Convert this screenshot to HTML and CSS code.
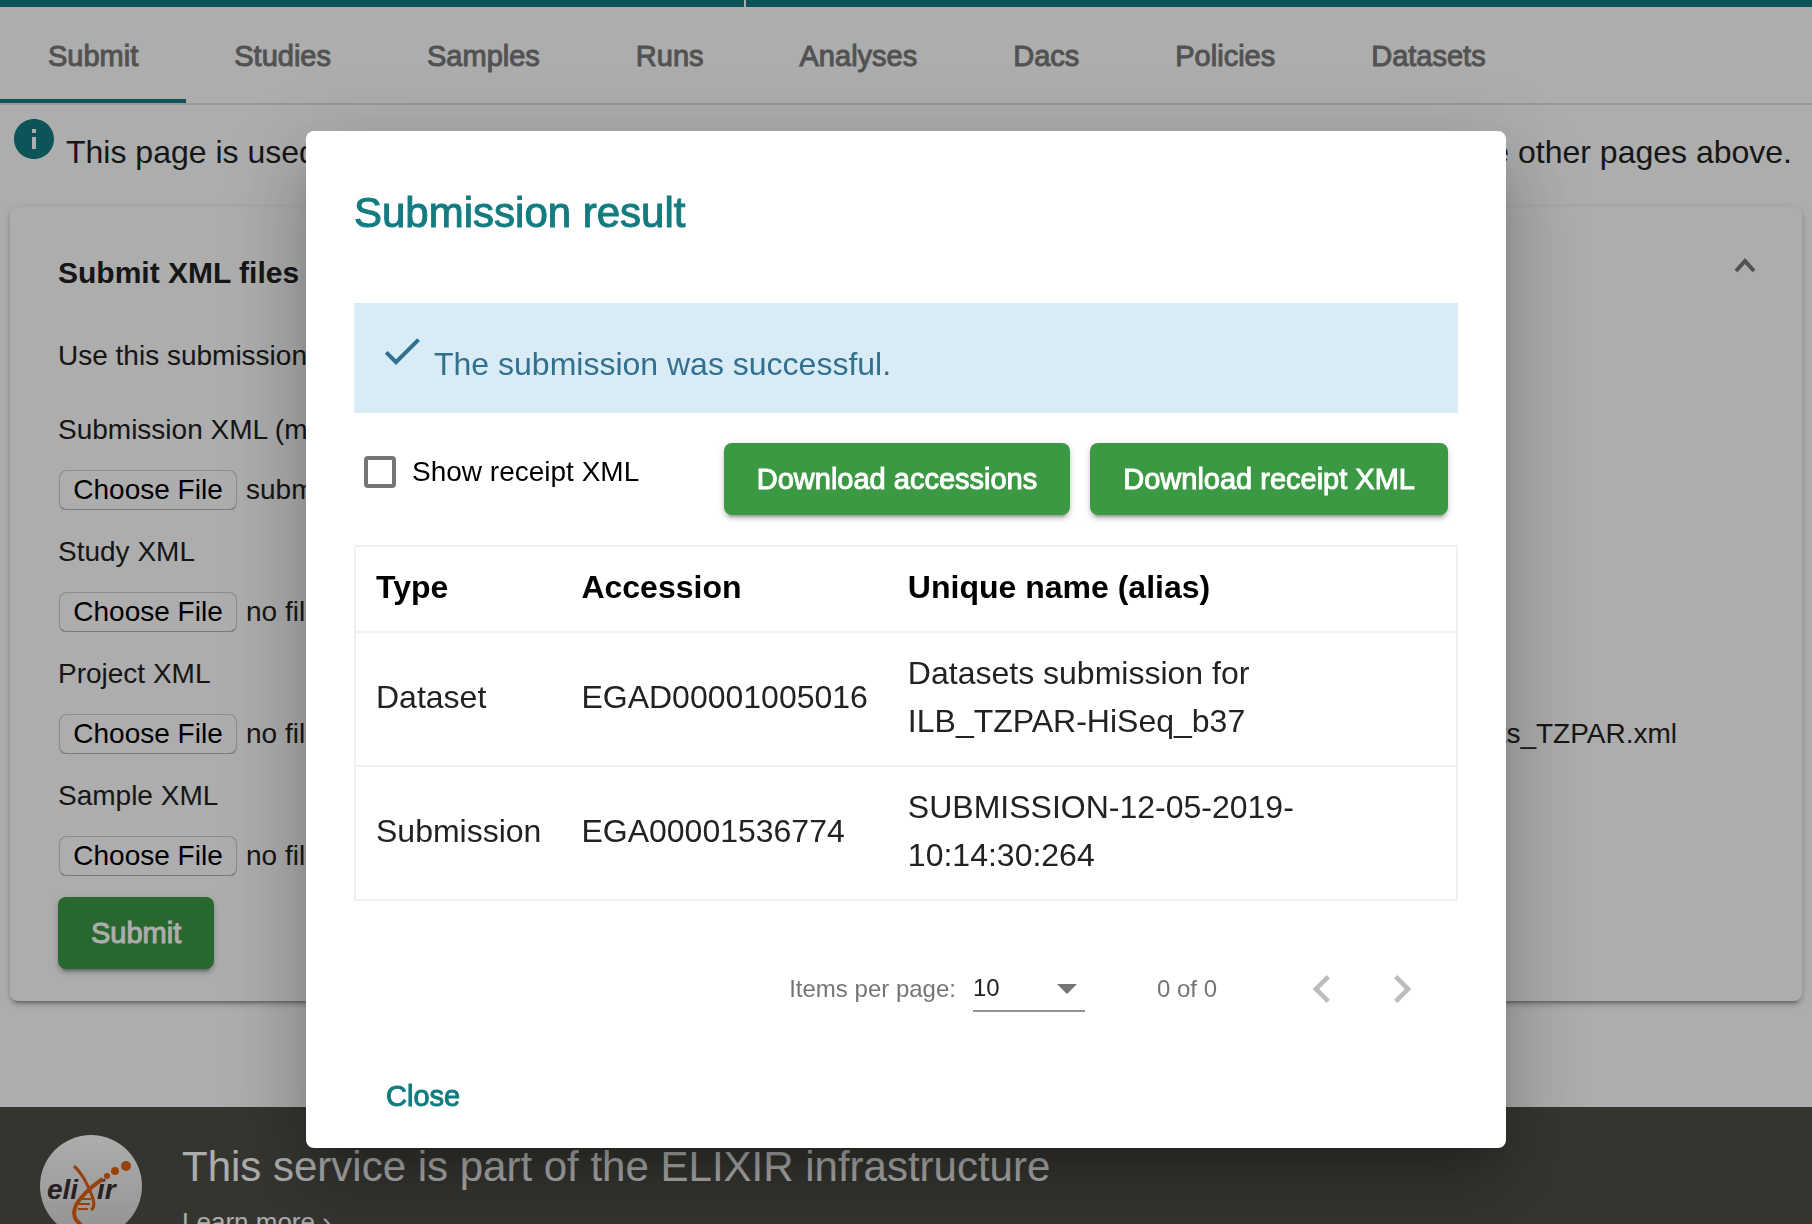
FILE: index.html
```html
<!DOCTYPE html>
<html lang="en">
<head>
<meta charset="utf-8">
<title>Submission result</title>
<meta name="viewport" content="width=device-width, initial-scale=1">
<link rel="stylesheet" href="styles.css">
</head>
<body>
<header class="masthead"><span class="masthead-left"></span><span class="masthead-right"></span></header>
<nav class="tabs">
  <a class="tab tab-active" href="#submit">Submit</a>
  <a class="tab" href="#studies">Studies</a>
  <a class="tab" href="#samples">Samples</a>
  <a class="tab" href="#runs">Runs</a>
  <a class="tab" href="#analyses">Analyses</a>
  <a class="tab" href="#dacs">Dacs</a>
  <a class="tab" href="#policies">Policies</a>
  <a class="tab" href="#datasets">Datasets</a>
</nav>
<main>
  <div class="info">
    <svg class="info-icon" viewBox="0 0 24 24" aria-hidden="true"><path d="M12 2C6.480 2 2 6.480 2 12s4.480 10 10 10 10-4.480 10-10S17.520 2 12 2zm1 15h-2v-6h2v6zm0-8h-2V7h2v2z"/></svg>
    <p class="info-text"><span>This page is used to submit XML files.</span><span>For interactive submission use the other pages above.</span></p>
  </div>
  <section class="card">
    <div class="card-head">
      <h2 class="card-title">Submit XML files</h2>
      <button class="collapse" type="button" aria-label="Collapse"><svg viewBox="0 0 24 16" aria-hidden="true"><path d="M3 14 12 4 21 14"/></svg></button>
    </div>
    <p class="card-intro">Use this submission form to submit XML files.</p>
    <form class="upload">
      <div class="fields">
        <div class="field"><label for="f-submission">Submission XML (mandatory)</label><div class="picker"><input id="f-submission" type="file"><span>submission.xml</span></div></div>
        <div class="field"><label for="f-experiment">Experiment XML</label><div class="picker"><input id="f-experiment" type="file"><span>no file selected</span></div></div>
        <div class="field"><label for="f-study">Study XML</label><div class="picker"><input id="f-study" type="file"><span>no file selected</span></div></div>
        <div class="field"><label for="f-run">Run XML</label><div class="picker"><input id="f-run" type="file"><span>no file selected</span></div></div>
        <div class="field"><label for="f-project">Project XML</label><div class="picker"><input id="f-project" type="file"><span>no file selected</span></div></div>
        <div class="field"><label for="f-dataset">Dataset XML</label><div class="picker"><input id="f-dataset" type="file"><span>ILB_HiSeq_submissions_datasets_TZPAR.xml</span></div></div>
        <div class="field"><label for="f-sample">Sample XML</label><div class="picker"><input id="f-sample" type="file"><span>no file selected</span></div></div>
        <div class="field"><label for="f-policy">Policy XML</label><div class="picker"><input id="f-policy" type="file"><span>no file selected</span></div></div>
      </div>
      <button class="btn" type="button">Submit</button>
    </form>
  </section>
</main>
<footer class="footer">
  <svg class="logo" viewBox="0 0 104 104" role="img" aria-label="elixir">
    <defs><linearGradient id="disc" x1="0" y1="0" x2="0" y2="1"><stop offset="0" stop-color="#fff"/><stop offset="1" stop-color="#d8d8d8"/></linearGradient></defs>
    <circle cx="52" cy="52" r="51" fill="url(#disc)"/>
    <g class="logo-word"><text x="8" y="65">eli</text><text x="58" y="65">ir</text></g>
    <g fill="none" stroke="#e06010">
      <path d="M35 32C43 39 47 48 51 57S57 73 52 76" stroke-width="3"/>
      <path d="M64 45C54 51 48 57 42 64 34 73 33 82 39 88S46 98 42 104" stroke-width="4"/>
      <path d="M43 65h9M40 70h11M39 75h10" stroke-width="2"/>
    </g>
    <g fill="#e06010"><circle cx="62" cy="46" r="2"/><circle cx="68" cy="42" r="3"/><circle cx="76" cy="37" r="4"/><circle cx="87" cy="32" r="5"/></g>
  </svg>
  <div class="footer-copy">
    <h3 class="footer-title">This service is part of the ELIXIR infrastructure</h3>
    <a class="footer-link" href="#elixir">Learn more ›</a>
  </div>
</footer>

<div class="backdrop">
  <div class="modal" role="dialog" aria-modal="true" aria-labelledby="modal-title">
    <h1 class="modal-title" id="modal-title">Submission result</h1>
    <div class="alert" role="status">
      <svg class="alert-icon" viewBox="0 0 24 24" aria-hidden="true"><path d="M9 16.170 4.830 12l-1.420 1.410L9 19 21 7l-1.410-1.410z"/></svg>
      <span>The submission was successful.</span>
    </div>
    <div class="actions">
      <label class="check"><input type="checkbox">Show receipt XML</label>
      <button class="btn" type="button">Download accessions</button>
      <button class="btn" type="button">Download receipt XML</button>
    </div>
    <table class="results">
      <thead><tr><th scope="col">Type</th><th scope="col">Accession</th><th scope="col">Unique name (alias)</th></tr></thead>
      <tbody>
        <tr><td>Dataset</td><td>EGAD00001005016</td><td>Datasets submission for<br>ILB_TZPAR-HiSeq_b37</td></tr>
        <tr><td>Submission</td><td>EGA00001536774</td><td>SUBMISSION-12-05-2019-<br>10:14:30:264</td></tr>
      </tbody>
    </table>
    <div class="paginator">
      <label for="page-size">Items per page:</label>
      <span class="select"><select id="page-size"><option>10</option></select><svg viewBox="0 0 20 10" aria-hidden="true"><path d="M0 0h20L10 10z"/></svg></span>
      <span class="range">0 of 0</span>
      <button class="page-btn" type="button" disabled aria-label="Previous page"><svg viewBox="0 0 24 24" aria-hidden="true"><path d="M15.410 7.410 14 6l-6 6 6 6 1.410-1.410L10.830 12z"/></svg></button>
      <button class="page-btn" type="button" disabled aria-label="Next page"><svg viewBox="0 0 24 24" aria-hidden="true"><path d="M10 6 8.590 7.410 13.170 12l-4.580 4.590L10 18l6-6z"/></svg></button>
    </div>
    <button class="close" type="button">Close</button>
  </div>
</div>
</body>
</html>
```
FILE: styles.css
```css
:root {
  --teal: #127c80;
  --green: #3c9943;
  --ink: #222;
}

* { box-sizing: border-box; }

body {
  margin: 0;
  height: 100vh;
  overflow: hidden;
  background: #fff;
  color: var(--ink);
  font: 28px/40px "Liberation Sans", Arial, sans-serif;
}

h1, h2, h3, p { margin: 0; font-weight: 400; }

button, input, select { font: inherit; color: inherit; }

button { border: 0; padding: 0; background: none; }

svg { display: block; flex: none; }

/* medium weight for a family that has only regular and bold */
.tab, .btn, .close, .modal-title { -webkit-text-stroke: 1px currentColor; }

/* top bar and tabs */
.masthead { display: flex; gap: 2px; height: 7px; }
.masthead-left { flex: 745; background: var(--teal); }
.masthead-right { flex: 1067; background: var(--teal); }

.tabs {
  display: flex;
  border-bottom: 2px solid #e0e0e0;
}

.tab {
  padding: 6px 48px 0;
  border-bottom: 4px solid transparent;
  color: #7a7a7a;
  font-size: 29px;
  line-height: 86px;
  text-decoration: none;
}

.tab-active { border-bottom-color: var(--teal); }

/* page body */
.info {
  display: flex;
  align-items: baseline;
  gap: 8px;
  padding: 10px 20px 31px 10px;
  font-size: 32px;
  line-height: 48px;
}

.info-icon { width: 48px; height: 48px; fill: var(--teal); }

.info-text {
  flex: 1;
  display: flex;
  justify-content: space-between;
  white-space: nowrap;
}

.card {
  margin: 0 10px 106px;
  padding: 42px 45px 32px 48px;
  border-radius: 8px;
  background: #fff;
  box-shadow: 0 6px 2px -4px rgba(0, 0, 0, .2), 0 4px 4px rgba(0, 0, 0, .14), 0 2px 10px rgba(0, 0, 0, .12);
}

.card-head { display: flex; justify-content: space-between; align-items: flex-start; }
.card-title { font-size: 30px; font-weight: 700; line-height: 48px; }
.collapse { padding: 8px 0 0; line-height: 0; }
.collapse svg { width: 24px; height: 16px; fill: none; stroke: #7a7a7a; stroke-width: 4; }
.card-intro { margin: 39px 0 34px; }

.fields { display: grid; grid-template-columns: 1fr 1fr; row-gap: 22px; margin-bottom: 21px; }
.field { display: flex; flex-direction: column; gap: 20px; }
.picker { display: flex; gap: 9px; white-space: nowrap; }
.picker input { width: 179px; height: 40px; padding-left: 1px; overflow: visible; color: transparent; }
.picker input::file-selector-button {
  width: 178px;
  height: 40px;
  margin: 0 40px 0 0;
  padding: 0;
  border: 1px solid #d0d0d0;
  border-bottom-color: #b4b4b4;
  border-radius: 8px;
  background: #fff;
  box-shadow: 0 1px 1px rgba(0, 0, 0, .2);
  color: #000;
  font: 28px/38px "Liberation Sans", Arial, sans-serif;
}

.btn {
  height: 72px;
  padding: 0 33px;
  border-radius: 8px;
  background: var(--green);
  box-shadow: 0 6px 2px -4px rgba(0, 0, 0, .2), 0 4px 4px rgba(0, 0, 0, .14), 0 2px 10px rgba(0, 0, 0, .12);
  color: #fff;
  font-size: 29px;
}

/* footer */
.footer {
  display: flex;
  gap: 39px;
  padding: 27px 39px;
  background: #4e4e48;
  color: #fff;
}

.logo { width: 104px; height: 104px; }
.logo-word { fill: #3a3030; font: italic 700 28px "Liberation Sans", Arial, sans-serif; }
.footer-copy { display: flex; flex-direction: column; }
.footer-title { font-size: 42px; line-height: 66px; }
.footer-link { padding-top: 2px; color: inherit; font-size: 26px; text-decoration: none; }

/* dialog */
.backdrop {
  position: fixed;
  inset: 0;
  display: flex;
  justify-content: center;
  align-items: flex-start;
  padding-top: 131px;
  background: rgba(0, 0, 0, .32);
}

.modal {
  flex: 0 1 1200px;
  padding: 48px 48px 16px;
  border-radius: 8px;
  background: #fff;
  box-shadow: 0 22px 30px -14px rgba(0, 0, 0, .2), 0 48px 76px 6px rgba(0, 0, 0, .14), 0 18px 92px 16px rgba(0, 0, 0, .12);
}

.modal-title { margin-bottom: 56px; color: var(--teal); font-size: 42px; line-height: 68px; }

.alert {
  display: flex;
  align-items: baseline;
  gap: 8px;
  padding: 24px 24px 25px;
  background: #d9ebf5;
  color: #31708f;
  font-size: 32px;
  line-height: 48px;
}

.alert-icon { width: 48px; height: 48px; fill: currentColor; }

.actions { display: flex; align-items: flex-start; gap: 20px; margin: 30px 0; padding: 0 10px; }

.check {
  display: flex;
  align-items: center;
  gap: 16px;
  margin-right: auto;
  color: #000;
  line-height: 57px;
}

.check input {
  appearance: none;
  width: 32px;
  height: 32px;
  margin: 0;
  border: 4px solid #757575;
  border-radius: 4px;
}

.results {
  width: 100%;
  border-collapse: collapse;
  border: 2px solid #f0f0f0;
  font-size: 32px;
  line-height: 48px;
}

.results tr { border-bottom: 2px solid #f0f0f0; }
.results th, .results td { padding: 16px 20px 20px; text-align: left; }
.results th { color: #000; }
.results th:last-child { width: 100%; }
.results td { white-space: nowrap; }

.paginator {
  display: flex;
  justify-content: flex-end;
  align-items: center;
  height: 112px;
  margin-top: 32px;
  padding: 0 16px;
  color: #757575;
  font-size: 24px;
}

.select { display: grid; grid-template-columns: 1fr 28px; align-items: center; width: 112px; margin: 0 72px 0 17px; }
.select select {
  grid-area: 1 / 1 / 2 / 3;
  appearance: none;
  height: 46px;
  padding: 0;
  border: 0;
  border-bottom: 2px solid #949494;
  border-radius: 0;
  background: none;
  color: var(--ink);
}
.select svg { grid-area: 1 / 2; width: 20px; height: 10px; fill: #757575; pointer-events: none; }

.range { margin-right: 65px; }
.page-btn { display: grid; place-items: center; width: 80px; height: 80px; }
.page-btn svg { width: 56px; height: 56px; fill: #bdbdbd; }

.close { display: block; height: 72px; margin-top: 15px; padding: 0 32px; color: var(--teal); font-size: 29px; }
```
